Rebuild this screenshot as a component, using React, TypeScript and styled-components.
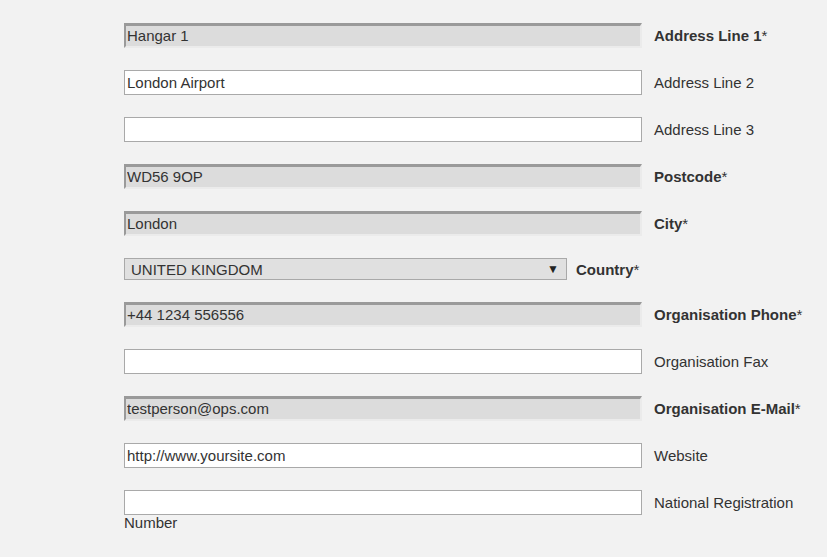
import React from "react";
import styled, {createGlobalStyle} from "styled-components";

type FieldType = {
    label: string
    value: string
    required?: boolean
    locked?: boolean
}

const fieldsTop: FieldType[] = [
    {label: 'Address Line 1', value: 'Hangar 1', required: true, locked: true},
    {label: 'Address Line 2', value: 'London Airport'},
    {label: 'Address Line 3', value: ''},
    {label: 'Postcode', value: 'WD56 9OP', required: true, locked: true},
    {label: 'City', value: 'London', required: true, locked: true},
]

const fieldsBottom: FieldType[] = [
    {label: 'Organisation Phone', value: '+44 1234 556556', required: true, locked: true},
    {label: 'Organisation Fax', value: ''},
    {label: 'Organisation E-Mail', value: 'testperson@ops.com', required: true, locked: true},
    {label: 'Website', value: 'http://www.yoursite.com'},
    {label: 'National Registration Number', value: ''},
]

const Field: React.FC<{field: FieldType}> = ({field}) => (
    <Row>
        <TextInput $locked={!!field.locked} readOnly value={field.value} />
        <Label>
            {field.required ? <><b>{field.label}</b>*</> : field.label}
        </Label>
    </Row>
)

export default function App() {
    return (
        <>
            <GlobalStyle />
            <Form>
                {fieldsTop.map(f => <Field key={f.label} field={f} />)}
                <SelectRow>
                    <Select>
                        <span>UNITED KINGDOM</span>
                        <Arrow>▼</Arrow>
                    </Select>
                    <SelectLabel><b>Country</b>*</SelectLabel>
                </SelectRow>
                {fieldsBottom.map(f => <Field key={f.label} field={f} />)}
            </Form>
        </>
    )
}

const GlobalStyle = createGlobalStyle`
  html, body {
    margin: 0;
    background: #f2f2f2;
  }
  body {
    font-family: "Liberation Sans", Arial, sans-serif;
    font-size: 15px;
    color: #333;
  }
`

const Form = styled.div`
  padding: 23px 0 0 124px;
  box-sizing: border-box;
  width: 827px;
`

// inline flow so a long label wraps back under the input, as in the original
const Row = styled.div`
  display: block;
  height: 25px;
  margin-bottom: 22px;
  line-height: 16px;
`

const TextInput = styled.input<{$locked: boolean}>`
  display: inline-block;
  box-sizing: border-box;
  width: 518px;
  height: 25px;
  margin: 0;
  padding: 0 2px;
  font-family: "Liberation Sans", Arial, sans-serif;
  font-size: 15px;
  color: #333;
  outline: none;
  background: ${({$locked}) => ($locked ? '#dcdcdc' : '#fff')};
  border: ${({$locked}) => ($locked ? '0' : '1px solid #a9a9a9')};
  ${({$locked}) => $locked && `
    border-top: 3px solid #9a9a9a;
    border-left: 2px solid #9a9a9a;
    border-right: 2px solid #ebebeb;
    border-bottom: 2px solid #ebebeb;
    padding: 0 2px 2px 1px;
  `}
`

const Label = styled.span`
  margin-left: 12px;
  b {
    font-weight: 700;
  }
`

const SelectRow = styled.div`
  display: flex;
  align-items: center;
  margin-bottom: 22px;
  height: 22px;
`

const Select = styled.div`
  box-sizing: border-box;
  width: 443px;
  height: 22px;
  border: 1px solid #a9a9a9;
  background: #e0e0e0;
  display: flex;
  align-items: center;
  justify-content: space-between;
  padding: 0 7px 0 6px;
  color: #333;
`

const Arrow = styled.span`
  font-size: 12px;
  color: #222;
`

const SelectLabel = styled.span`
  margin-left: 9px;
  b {
    font-weight: 700;
  }
`
